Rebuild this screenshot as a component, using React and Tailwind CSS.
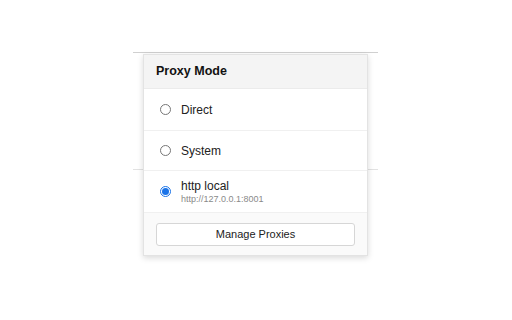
import { useState } from "react";

const MODES = [
  { id: "direct", name: "Direct" },
  { id: "system", name: "System" },
  { id: "http", name: "http local", sub: "http://127.0.0.1:8001" },
];

const App = () => {
  const [mode, setMode] = useState("http");

  return (
    <div className="w-[512px] h-[320px] bg-white relative font-['Liberation_Sans',Arial,sans-serif] text-[#222]">
      {/* page behind the popup */}
      <div className="pt-[52px] pl-[133px] w-[378px]">
        <div className="h-px bg-[#d0d0d0]" />
        <div className="h-[116px]" />
        <div className="h-px bg-[#e2e2e2]" />
      </div>

      <div className="absolute left-[143px] top-[54px] w-[225px] bg-white border border-[#e3e3e3] shadow-[0_2px_6px_rgba(0,0,0,0.15)]">
        <div className="h-[34px] bg-[#f4f4f4] border-b border-[#ebebeb] flex items-center px-[12px]">
          <span className="text-[12.5px] font-bold text-[#111]">Proxy Mode</span>
        </div>
        {MODES.map((m, i) => (
          <div
            key={m.id}
            onClick={() => setMode(m.id)}
            className={`flex items-center px-[16px] gap-[10px] border-b border-[#f0f0f0] ${i === 1 ? "h-[40px]" : "h-[42px]"}`}
          >
            {mode === m.id ? (
              <span className="w-[11px] h-[11px] rounded-full border border-[#1a73e8] flex items-center justify-center shrink-0">
                <span className="w-[7px] h-[7px] rounded-full bg-[#1a73e8]" />
              </span>
            ) : (
              <span className="w-[11px] h-[11px] rounded-full border border-[#767676] shrink-0" />
            )}
            <div className="flex flex-col">
              <span className="text-[12px] leading-[14px] text-[#222]">{m.name}</span>
              {m.sub && <span className="text-[9px] leading-[12px] text-[#8a8a8a]">{m.sub}</span>}
            </div>
          </div>
        ))}
        <div className="h-[42px] bg-[#fafafa] flex items-center px-[12px]">
          <button className="w-full h-[23px] bg-white border border-[#d6d6d6] rounded-[3px] text-[11px] text-[#222]">
            Manage Proxies
          </button>
        </div>
      </div>
    </div>
  );
};

export default App;
